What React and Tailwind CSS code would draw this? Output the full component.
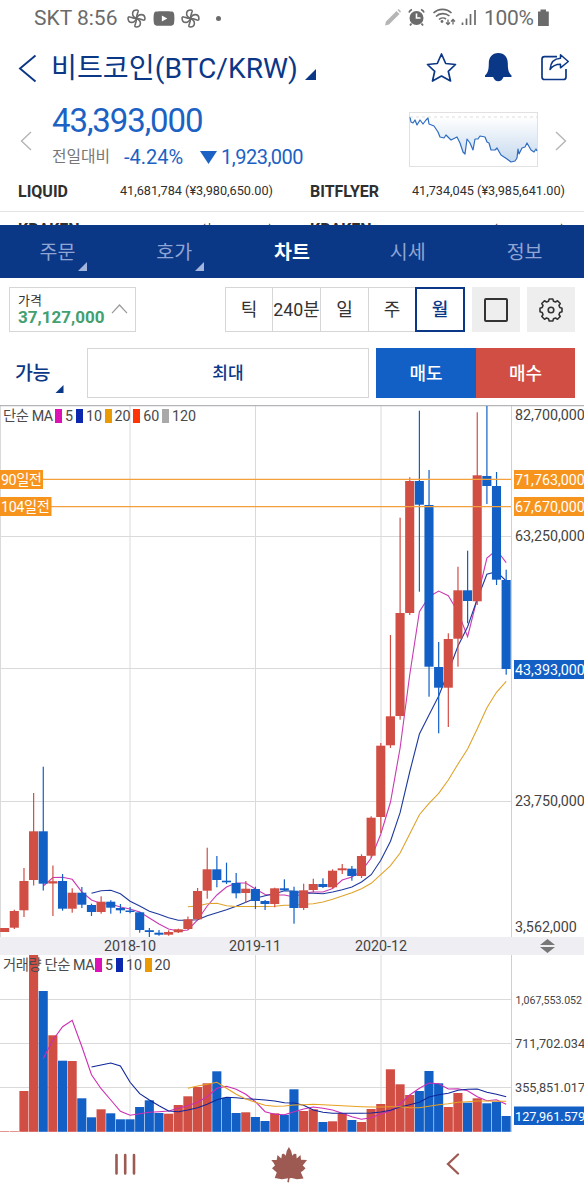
import React from "react";
import { FaYoutube } from "react-icons/fa";

const RED = "#d14e45";
const BLUE = "#1260c6";
const FONT = "Roboto, 'Noto Sans CJK KR', sans-serif";

// direction, body top, body bottom, wick high, wick low, volume bar top
const CANDLES = [
  ["r", 928, 932, 928, 932, 1131.2],
  ["r", 911, 927.7, 909.7, 929, 1131.2],
  ["r", 881, 910.3, 868, 917, 1091],
  ["r", 831.3, 880, 793, 885.5, 955],
  ["b", 831.3, 883.7, 766.7, 890.5, 991],
  ["r", 881.2, 883.5, 865.5, 916, 1035.3],
  ["b", 881, 908.7, 874, 910.7, 1060.7],
  ["r", 892.7, 908.7, 888.3, 912.7, 1061],
  ["b", 892.7, 904.7, 887, 908, 1098.3],
  ["b", 905, 912, 903.7, 916, 1117.3],
  ["r", 901.7, 912, 896.3, 913.7, 1109.3],
  ["b", 901.7, 907.7, 900.3, 913.7, 1113.3],
  ["b", 908, 910.3, 904, 913.3, 1119.3],
  ["b", 910.5, 912, 907, 913.3, 1119.3],
  ["b", 912.3, 930, 911.7, 932.7, 1107],
  ["b", 930.2, 932, 928, 937, 1100.3],
  ["b", 932.7, 934.7, 930, 935.7, 1113],
  ["r", 932, 934.7, 930.3, 935.7, 1113.7],
  ["r", 929.3, 932.3, 928.7, 933, 1105],
  ["r", 919.3, 929, 916.5, 929.7, 1096.3],
  ["r", 891, 919.3, 888, 920.3, 1087],
  ["r", 869.3, 890.7, 847.7, 898.7, 1083.3],
  ["b", 869.3, 880, 856, 887.3, 1071.3],
  ["b", 880.7, 882.3, 862.7, 884, 1097.7],
  ["b", 883, 893.3, 873, 898.3, 1113],
  ["r", 888.7, 893, 881, 902.7, 1112.3],
  ["b", 889, 901, 886.7, 909, 1117],
  ["b", 901, 904, 900, 910, 1121],
  ["r", 888.3, 904, 887.7, 907.3, 1113.3],
  ["b", 888.3, 890.3, 879.3, 890.7, 1114.7],
  ["b", 890.7, 908, 886.7, 923.7, 1089.3],
  ["r", 890.3, 908, 883.7, 910, 1111],
  ["r", 884, 890, 878.7, 892.3, 1109.3],
  ["b", 884, 887, 878.3, 888, 1122],
  ["r", 870.7, 887.3, 869.3, 888.7, 1121.3],
  ["r", 868.3, 870.3, 864, 874, 1113.3],
  ["b", 868.7, 876, 866, 880.7, 1120],
  ["r", 856, 876, 854.3, 878, 1122],
  ["r", 817.7, 855.7, 816.3, 858, 1109],
  ["r", 745.7, 817, 743, 833, 1104],
  ["r", 716.3, 745.3, 635, 748, 1069.3],
  ["r", 613, 716, 517.7, 719.7, 1084.3],
  ["r", 481, 613, 477.3, 615, 1095],
  ["b", 481, 504.7, 410.7, 591.7, 1091],
  ["b", 505, 666.7, 470, 696.7, 1071],
  ["b", 667, 687.7, 642, 733.3, 1083.3],
  ["r", 639, 687.7, 633.3, 727, 1107],
  ["r", 590.3, 638.7, 566.7, 666.7, 1093],
  ["b", 590.3, 601, 550.7, 623.3, 1102.7],
  ["r", 475.3, 601.3, 412.3, 605, 1098.3],
  ["b", 476, 486, 406, 504, 1103.3],
  ["b", 486, 579.7, 472, 585, 1101.7],
  ["b", 580, 669, 569.7, 674.7, 1116],
];

const PRICE_MA5 = [886, 877.5, 877.3, 879.3, 892, 900, 903.5, 904, 907, 909, 912, 918, 924, 929, 931, 930, 920, 906, 895, 887, 883, 883, 889, 894.5, 895, 895, 897, 893, 892, 892, 888.5, 880, 877, 871, 858, 834, 802, 748, 675, 611.7, 596.7, 591, 595.7, 612, 636.7, 598, 558, 550, 562.7];
const PRICE_MA10 = [893.3, 890.7, 890.3, 893.7, 901.3, 906, 911.3, 914.3, 917.7, 920.3, 920.3, 919.7, 915.7, 912.7, 909.7, 906.3, 902.3, 898.3, 895.7, 893.7, 890.7, 891.3, 893.3, 893.3, 893.7, 892, 889.7, 887, 882, 874.7, 860.3, 841.3, 812.7, 772, 734, 715, 696, 671.7, 646, 626.7, 599, 574.3, 571.7, 581];
const PRICE_MA20 = [906.7, 906, 903.7, 903.3, 905.7, 906.5, 906.5, 906.5, 906.5, 906.3, 905.3, 905.3, 904.3, 903.7, 902, 899.3, 896, 892.7, 888.7, 883.3, 874.7, 865.7, 853, 834, 814.7, 803.3, 793.3, 780, 764, 749, 728.7, 707.7, 692.3, 681.3];
const VOL_MA5 = [1058.5, 1040, 1026.7, 1020.3, 1046.7, 1074.7, 1088.7, 1100, 1111.3, 1115.3, 1113.7, 1112.3, 1111.7, 1111, 1108.3, 1105.7, 1102.3, 1096.7, 1088.3, 1086.3, 1089.3, 1094.3, 1101.7, 1111.7, 1114.3, 1114.7, 1111.7, 1109, 1107, 1108.3, 1110, 1113.3, 1116.7, 1119.3, 1117.7, 1114, 1111, 1104, 1095, 1088.3, 1083, 1083.7, 1089, 1088.7, 1090.7, 1096.7, 1100.7, 1099.7, 1104.3];
const VOL_MA10 = [1067, 1065, 1063, 1066, 1082.3, 1093.7, 1100, 1105.7, 1111, 1111.7, 1110, 1107.7, 1104.3, 1099.7, 1097.3, 1097.7, 1098.7, 1099.3, 1100, 1101, 1102.7, 1103, 1105.3, 1110, 1112.3, 1113.3, 1113.3, 1113.3, 1113.3, 1113, 1112, 1110.3, 1107, 1104.7, 1102.3, 1097, 1094.7, 1093.3, 1090.3, 1089.3, 1089, 1092.3, 1094.3, 1096.7];
const VOL_MA20 = [1088.3, 1086, 1084.3, 1082.3, 1088.3, 1094.3, 1099, 1102.3, 1105.3, 1106.3, 1106, 1105, 1104.7, 1104.3, 1104.7, 1105.3, 1105.7, 1106.3, 1106.7, 1107, 1107, 1106.7, 1106.7, 1107.7, 1107.7, 1106.3, 1104.7, 1103.7, 1102.3, 1101.7, 1101, 1101, 1101.2, 1101.3];

const xAt = (i) => 4.7 + 9.644 * i;

function Average({ start, values, color }) {
  const points = values.map((y, k) => `${xAt(start + k).toFixed(1)},${y}`).join(" ");
  return <polyline points={points} fill="none" stroke={color} strokeWidth="1.1" />;
}

function Legend({ title, titleClass, items, className }) {
  return (
    <div className={`absolute left-[3px] flex h-5 items-center text-[14.3px] leading-none text-[#4a4a4a] ${className}`}>
      <span className={`whitespace-nowrap tracking-[-0.4px] ${titleClass}`}>{title}</span>
      {items.map(([label, swatch, width]) => (
        <span key={label} className={`flex items-center ${width}`}>
          <i className={`mr-[3px] h-[14px] w-[7px] ${swatch}`} />
          {label}
        </span>
      ))}
    </div>
  );
}

function Charts() {
  return (
    <section className="relative h-[728px]">
      <svg viewBox="0 405 584 728" width="584" height="728" fontFamily={FONT} className="block">
        <g stroke="#dadada" strokeWidth="1">
          <path d="M0 536.5H512M0 668.5H512M0 801.5H512M0 999.5H512M0 1043.5H512M0 1087.5H512" />
          <path d="M130 406V1132M255.500 406V1132M381 406V1132M0.500 406V937" />
        </g>
        <path d="M511.500 406V1132" stroke="#cfcfcf" />
        <path d="M0 405.500H584" stroke="#b4b4b8" strokeWidth="1.500" />

        <Average start={4} values={PRICE_MA5} color="#c93bb3" />
        <Average start={9} values={PRICE_MA10} color="#1f3a9c" />
        <Average start={19} values={PRICE_MA20} color="#dfa32b" />
        {CANDLES.map(([dir, top, bottom, high, low], i) => {
          const color = dir === "r" ? RED : BLUE;
          return (
            <g key={i} fill={color}>
              <rect x={xAt(i) - 0.6} y={high} width="1.2" height={low - high} />
              <rect x={xAt(i) - 4.6} y={top} width="9.1" height={bottom - top} />
            </g>
          );
        })}
        <path d="M0 479.300H511M0 506.700H511" stroke="#f4a03c" strokeWidth="1.300" />

        <rect x="0" y="937" width="584" height="18" fill="#eeeef3" />
        <g fontSize="14.3" fill="#444" textAnchor="middle">
          <text x="130" y="951">2018-10</text>
          <text x="255" y="951">2019-11</text>
          <text x="381" y="951">2020-12</text>
        </g>
        <path d="M540 945L547.500 939L555 945ZM540 947L547.500 953L555 947Z" fill="#777" />

        {CANDLES.map(([dir, , , , , top], i) => (
          <rect key={i} x={xAt(i) - 4.6} y={top} width="9.1" height={1131.8 - top} fill={dir === "r" ? RED : BLUE} />
        ))}
        <Average start={4} values={VOL_MA5} color="#cc2db4" />
        <Average start={9} values={VOL_MA10} color="#10269a" />
        <Average start={19} values={VOL_MA20} color="#e8a020" />

        <g fontSize="14.3" fill="#444">
          <text x="515" y="420">82,700,000</text>
          <text x="515" y="541">63,250,000</text>
          <text x="515" y="806">23,750,000</text>
          <text x="515" y="932">3,562,000</text>
        </g>
        <g fill="#444">
          <text x="515.500" y="1003.500" fontSize="10.6">1,067,553.052</text>
          <text x="515" y="1048" fontSize="12.700">711,702.034</text>
          <text x="515" y="1092" fontSize="12.700">355,851.017</text>
        </g>

        <path d="M514 470H584V489H514ZM514 497H584V516H514ZM0 470H43V489H0ZM0 497H51.500V516H0Z" fill="#f7941d" />
        <path d="M514 660H584V679H514ZM514 1106.500H584V1125H514Z" fill={BLUE} />
        <g fontSize="14.3" fill="#fff">
          <text x="515" y="484.500">71,763,000</text>
          <text x="515" y="512">67,670,000</text>
          <text x="515" y="674.500">43,393,000</text>
          <text x="1" y="484.500" textLength="41">90일전</text>
          <text x="1" y="512" textLength="49">104일전</text>
          <text x="515" y="1120.500" fontSize="12.700">127,961.579</text>
        </g>
      </svg>
      <Legend
        className="top-[1px]"
        title="단순 MA"
        titleClass="w-[52px]"
        items={[
          ["5", "bg-[#dc12b4]", "w-[21px]"],
          ["10", "bg-[#0b27ad]", "w-[28.500px]"],
          ["20", "bg-[#e99a05]", "w-[28.700px]"],
          ["60", "bg-[#ff3505]", "w-[28.700px]"],
          ["120", "bg-[#a9a9a9]", "w-[40px]"],
        ]}
      />
      <Legend
        className="top-[550px]"
        title="거래량 단순 MA"
        titleClass="w-[92px]"
        items={[
          ["5", "bg-[#dc12b4]", "w-[21px]"],
          ["10", "bg-[#0b27ad]", "w-[28.500px]"],
          ["20", "bg-[#e99a05]", "w-[29px]"],
        ]}
      />
    </section>
  );
}

function Pinwheel() {
  return (
    <svg width="19" height="19" viewBox="0 0 18 18" fill="none" stroke="#6b6b6b" strokeWidth="1.500" strokeLinejoin="round">
      {["", "rotate(90 9 9)", "rotate(180 9 9)", "rotate(270 9 9)"].map((turn) => (
        <path key={turn} transform={turn} d="M9 9C6.500 8 5.300 6.300 5.300 4.500C5.300 2.300 7 1 9.300 1C10.300 1 10.800 1.500 10.500 2.500C9.800 4.500 9 6 9 9Z" />
      ))}
    </svg>
  );
}

function StatusBar() {
  return (
    <div className="flex h-9 items-center pl-[34px] text-[21px] leading-none text-[#6b6b6b]">
      <span className="w-[93px] whitespace-nowrap">SKT 8:56</span>
      <Pinwheel />
      <FaYoutube className="ml-[6.500px] h-[23px] w-[22px]" />
      <span className="ml-[6.500px]"><Pinwheel /></span>
      <i className="ml-[16px] size-[5px] rounded-full bg-[#6b6b6b]" />
      <svg width="166" height="24" viewBox="385 5 166 24" className="ml-[163px]" fill="none" stroke="#6b6b6b">
        <path d="M386 24.500L387 20.500L397.500 10L400.500 13L390 23.500Z" fill="#b5b5b5" stroke="none" />
        <path d="M398.500 9L399.700 8L402 10.500L401 11.800Z" fill="#b5b5b5" stroke="none" />
        <circle cx="417.500" cy="17" r="7" fill="#6b6b6b" stroke="none" />
        <path d="M410 11.500C410.500 10 411.500 9 413 8.500M425 11.500C424.500 10 423.500 9 422 8.500M412.500 22.500L411 24.500M422.500 22.500L424 24.500" strokeWidth="1.800" />
        <path d="M417.500 12.500V17H421.500" stroke="#fff" strokeWidth="1.600" />
        <path d="M434.500 12C439.500 7.200 447.500 7.200 452.500 12M437 15.500C440.500 11.700 446.500 11.700 450.500 15M440 18.500C442 16.500 445 16.500 447 18" strokeWidth="1.600" />
        <circle cx="443" cy="20.500" r="1.400" fill="#6b6b6b" stroke="none" />
        <path d="M449 18.500V23.500M447 21.500L449 23.500L451 21.500M454 23.500V18.500M452 20.500L454 18.500L456 20.500" strokeWidth="1.300" />
        <path d="M463.500 24V21.500M467.500 24V17.500M471.500 24V13M476 24V9" strokeWidth="1.700" />
        <text x="485" y="24.300" fontSize="21" fontFamily={FONT} fill="#6b6b6b" stroke="none" textLength="50">100%</text>
        <path d="M539 10.500H541.500V8.500H547V10.500H549.800V25H539Z" fill="#6b6b6b" stroke="none" />
      </svg>
    </div>
  );
}

function Corner({ className }) {
  return (
    <svg viewBox="0 0 10 10" className={className} fill="currentColor">
      <path d="M10 0V10H0Z" />
    </svg>
  );
}

function Header() {
  return (
    <header className="flex h-16 items-center pl-[18px] text-[#0b3787]">
      <svg width="19" height="29" viewBox="0 0 19 29" fill="none" stroke="currentColor" strokeWidth="1.900">
        <path d="M17.500 1.500L2 14.500L17.500 27.500" />
      </svg>
      <h1 className="ml-[14px] w-[247px] whitespace-nowrap pt-[3px] text-[28.200px] leading-none">비트코인(BTC/KRW)</h1>
      <Corner className="ml-[7px] mt-[12px] size-[11px]" />
      <svg width="150" height="32" viewBox="425 52 150 32" className="ml-[109px]" fill="none" stroke="currentColor" strokeWidth="1.700" strokeLinejoin="round">
        <path d="M441.500 54L445.700 63.500L455.500 64.500L448.300 71.300L450.500 81L441.500 76L432.500 81L434.700 71.300L427.500 64.500L437.300 63.500Z" />
        <path d="M498.300 53C504.500 53 507.800 57.500 507.800 63.500C507.800 70 508.800 73 511.500 75.500V77H503.500C502.500 79.800 500.700 81.200 498.300 81.200S494.100 79.800 493.100 77H485V75.500C487.800 73 488.800 70 488.800 63.500C488.800 57.500 492.100 53 498.300 53Z" fill="currentColor" stroke="none" />
        <path d="M557 56.700H544.500Q542 56.700 542 59.200V77Q542 79.500 544.500 79.500H563.500Q566 79.500 566 77V69" />
        <path d="M560.500 54.800L568.300 61.500L560.500 67.800V64.300C555.500 64.200 552.500 66 550 69.500C550.500 63 554 58.600 560.500 58.300Z" strokeWidth="1.500" />
      </svg>
    </header>
  );
}

function Quote() {
  return (
    <section className="flex h-[75px] items-center pl-5 text-[#1b62c4]">
      <svg width="12" height="20" viewBox="0 0 12 20" fill="none" stroke="#b5b5b5" strokeWidth="1.400" className="mt-[6px]">
        <path d="M11 1L1.500 10L11 19" />
      </svg>
      <div className="ml-[20px] h-full w-[357px]">
        <div className="pt-[5px] text-[33px] leading-8 tracking-[-1.1px]">43,393,000</div>
        <div className="mt-[10px] flex h-5 items-center whitespace-nowrap text-[20px] leading-none">
          <span className="w-[72px] text-[15.800px] text-[#777]">전일대비</span>
          <span className="w-[76px]">-4.24%</span>
          <svg width="17" height="13" viewBox="0 0 17 13" fill="currentColor" className="mr-[4px]">
            <path d="M0 0H17L8.500 13Z" />
          </svg>
          <span className="tracking-[-0.5px]">1,923,000</span>
        </div>
      </div>
      <svg width="129" height="55" viewBox="0 0 129 55" className="mt-[3px]">
        <defs>
          <linearGradient id="fade" x1="0" y1="0" x2="0" y2="1">
            <stop offset="0" stopColor="#fff" />
            <stop offset="1" stopColor="#c6d9ee" />
          </linearGradient>
        </defs>
        <rect x=".5" y=".5" width="128" height="54" fill="#fff" stroke="#e1e1e1" />
        <path d="M1 5L2 10L4 11L6 8L8 13L11 8L14 12L17 8L19 6L20 12L25 14L29 20L31 25L35 26L37 23L42 28L48 25L51 31L54 40L56 42L58 27L61 31L64 38L66 27L69 27L71 24L76 25L78 30L80 31L82 38L86 38L88 36L92 43L95 45L98 47L102 50L106 49L108 46L109 37L110 42L113 36L116 35L118 31L122 38L125 40L127 37L128 39V5Z" fill="url(#fade)" />
        <path d="M1 5L2 10L4 11L6 8L8 13L11 8L14 12L17 8L19 6L20 12L25 14L29 20L31 25L35 26L37 23L42 28L48 25L51 31L54 40L56 42L58 27L61 31L64 38L66 27L69 27L71 24L76 25L78 30L80 31L82 38L86 38L88 36L92 43L95 45L98 47L102 50L106 49L108 46L109 37L110 42L113 36L116 35L118 31L122 38L125 40L127 37L128 39" fill="none" stroke="#2e6cc0" strokeWidth="1.200" strokeLinejoin="round" />
        <path d="M1 5H128" stroke="#ddd" strokeDasharray="3 3" />
      </svg>
      <svg width="12" height="20" viewBox="0 0 12 20" fill="none" stroke="#b5b5b5" strokeWidth="1.400" className="ml-[17px] mt-[6px]">
        <path d="M1 1L10.500 10L1 19" />
      </svg>
    </section>
  );
}

function Exchange({ name, quote }) {
  return (
    <div className="flex w-[292px] items-center justify-between pl-[18px] pr-[19px]">
      <b className="text-[16px] font-bold">{name}</b>
      <span className="text-[12.700px]">{quote}</span>
    </div>
  );
}

function Exchanges() {
  return (
    <section className="h-[50px] overflow-hidden leading-none text-[#2f2f2f]">
      <div className="flex h-[37px] border-b border-[#e4e4e4] pb-[3px]">
        <Exchange name="LIQUID" quote="41,681,784 (¥3,980,650.00)" />
        <Exchange name="BITFLYER" quote="41,734,045 (¥3,985,641.00)" />
      </div>
      <div className="flex h-[36px]">
        <Exchange name="KRAKEN" quote="41,711,781 ($36,984.50)" />
        <Exchange name="KRAKEN" quote="41,999,947 (€35,942.00)" />
      </div>
    </section>
  );
}

function Tabs() {
  const tabs = [["주문", true], ["호가", true], ["차트", false], ["시세", false], ["정보", false]];
  return (
    <nav className="grid h-[53px] grid-cols-5 bg-[#0b3787] text-[19.500px] leading-none text-[#8fa5d3]">
      {tabs.map(([name, more]) => (
        <div key={name} className={name === "차트" ? "relative flex items-center justify-center pt-[3px] font-bold text-white" : "relative flex items-center justify-center pr-[2px] pt-[3px]"}>
          {name}
          {more && <Corner className="absolute bottom-[7px] right-[29.500px] size-[9px] text-[#a3b5dc]" />}
        </div>
      ))}
    </nav>
  );
}

function Toolbar() {
  return (
    <div className="flex h-[54px] pl-[9px] pt-[9px] text-[18px] leading-none text-[#333]">
      <div className="flex h-[45px] w-[127px] items-center justify-between border border-[#d6d6d6] pl-[8px] pr-[7px]">
        <div className="pt-px">
          <div className="text-[13px] leading-[15px]">가격</div>
          <div className="text-[17px] font-bold leading-[19px] text-[#43a06f]">37,127,000</div>
        </div>
        <svg width="17" height="10" viewBox="0 0 17 10" fill="none" stroke="#999" strokeWidth="1.200" className="mb-px">
          <path d="M1 9.200L8.500 1L16 9.200" />
        </svg>
      </div>
      <div className="ml-[89px] flex h-[45px]">
        <div className="flex w-[48px] items-center justify-center border border-[#d6d6d6] pt-px">틱</div>
        <div className="flex w-[47px] items-center justify-center whitespace-nowrap border-y border-[#d6d6d6] pt-px text-[17.800px]">240분</div>
        <div className="flex w-[49px] items-center justify-center border border-[#d6d6d6] pt-px">일</div>
        <div className="flex w-[46px] items-center justify-center border-y border-[#d6d6d6] pt-px">주</div>
        <div className="flex w-[50px] items-center justify-center border-2 border-[#0b3787] pt-px font-medium text-[#0b3787]">월</div>
      </div>
      <div className="ml-[7px] flex h-[45px] w-12 items-center justify-center bg-[#eeeeee]">
        <i className="size-[24px] rounded-[2px] border-2 border-[#333]" />
      </div>
      <div className="ml-[7px] flex h-[45px] w-12 items-center justify-center bg-[#eeeeee]">
        <svg width="26" height="26" viewBox="-13 -13 26 26" fill="none" stroke="#333" strokeWidth="1.600" strokeLinejoin="round">
          {/* eight teeth around a ring */}
          <path d="M-1.800 -11H1.800L2.500 -8.800L4.500 -8L6.500 -9.200L9.200 -6.500L8 -4.500L8.800 -2.500L11 -1.800V1.800L8.800 2.500L8 4.500L9.200 6.500L6.500 9.200L4.500 8L2.500 8.800L1.800 11H-1.800L-2.500 8.800L-4.500 8L-6.500 9.200L-9.200 6.500L-8 4.500L-8.800 2.500L-11 1.800V-1.800L-8.800 -2.500L-8 -4.500L-9.200 -6.500L-6.500 -9.200L-4.500 -8L-2.500 -8.800Z" />
          <circle r="2.800" />
        </svg>
      </div>
    </div>
  );
}

function OrderRow() {
  return (
    <div className="flex h-[73px] pl-[15px] pt-[15.500px] leading-none">
      <div className="flex h-[50px] w-[72px] items-center text-[19.500px] font-medium text-[#0b3787]">
        <span className="w-[40px] whitespace-nowrap pt-[3px] tracking-[-0.4px]">가능</span>
        <Corner className="mt-[33px] size-[8.500px]" />
      </div>
      <div className="flex h-[50px] w-[282px] items-center justify-center border border-[#d6d6d6] pt-[2px] text-[17px] font-medium text-[#0b3787]">최대</div>
      <div className="ml-[7px] flex h-[50px] w-[100px] items-center justify-center bg-[#1260c6] pt-[2px] text-[18px] font-medium text-white">매도</div>
      <div className="flex h-[50px] w-[99px] items-center justify-center bg-[#d14e45] pt-[2px] text-[18px] font-medium text-white">매수</div>
    </div>
  );
}

function SystemNav() {
  return (
    <footer className="flex h-[67px] items-center pb-[5px] pl-[114px]">
      <svg width="22" height="22" viewBox="0 0 22 22" stroke="#9c5a52" strokeWidth="2.600" strokeLinecap="round">
        <path d="M2.500 2V20.500M11.200 2V20.500M20 2V20.500" />
      </svg>
      <svg width="38" height="37" viewBox="270 1146 38 37" className="ml-[134px]" fill="#9c5a52">
        <path d="M288.900 1147L291.200 1151L292.300 1155.800L294 1153.800L296.300 1154L296.700 1158.500L300.500 1155L301 1159.800L307 1160L304.300 1163.500L302.700 1165.500L305.500 1168.300L303.300 1170.500L300.800 1172.300L303.500 1178.500L297 1179.300L291.500 1178L289.600 1178.200L288.800 1182.500L287.300 1182L288 1178.200L282 1179.300L274.700 1178L276.800 1172.500L274.500 1170.500L272 1168.300L275 1165.500L273.700 1163L271.300 1160L276.700 1160L277.500 1155L281.300 1158.500L282 1154L284 1153.800L285.700 1155.800L286.700 1151Z" />
      </svg>
      <svg width="14" height="22" viewBox="0 0 14 22" fill="none" stroke="#9c5a52" strokeWidth="2.300" strokeLinecap="round" className="ml-[138px]">
        <path d="M12 1.500L2 11L12 20.500" />
      </svg>
    </footer>
  );
}

export default function App() {
  return (
    <main className="h-[1200px] w-[584px] overflow-hidden bg-white font-[Roboto,'Noto_Sans_CJK_KR',sans-serif]">
      <StatusBar />
      <Header />
      <Quote />
      <Exchanges />
      <Tabs />
      <Toolbar />
      <OrderRow />
      <Charts />
      <SystemNav />
    </main>
  );
}
